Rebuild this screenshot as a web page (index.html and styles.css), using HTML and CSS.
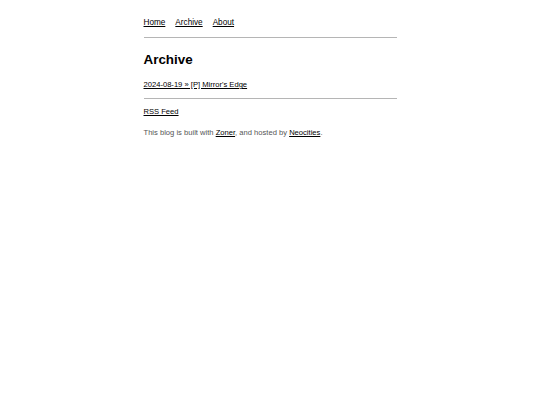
FILE: index.html
```html
<!DOCTYPE html>
<html>
<head>
<meta charset="utf-8">
<link rel="stylesheet" href="styles.css">
</head>
<body>
<div class="page">
  <nav class="nav">
    <a href="#">Home</a>
    <a href="#">Archive</a>
    <a href="#">About</a>
  </nav>
  <hr class="rule rule-top">
  <h1 class="title">Archive</h1>
  <ul class="posts">
    <li><a href="#">2024-08-19 » [P] Mirror's Edge</a></li>
  </ul>
  <hr class="rule rule-bottom">
  <p class="rss"><a href="#">RSS Feed</a></p>
  <p class="footer">This blog is built with <a href="#">Zoner</a>, and hosted by <a href="#">Neocities</a>.</p>
</div>
</body>
</html>
```
FILE: styles.css
```css
body {
  margin: 0;
  background: #fff;
  font-family: "Liberation Sans", Arial, sans-serif;
  font-size: 7.6px;
  color: #000;
}
.page {
  width: 253px;
  margin: 0 auto;
  padding-top: 17px;
}
a {
  color: #000;
  text-decoration: underline;
}
.nav {
  display: flex;
  gap: 10px;
  height: 11px;
  line-height: 11px;
  font-size: 8.2px;
}
.rule {
  border: 0;
  border-top: 1px solid #b5b5b5;
  margin: 0;
}
.rule-top {
  margin-top: 9px;
}
.title {
  font-size: 13.4px;
  font-weight: bold;
  margin: 13px 0 0;
  line-height: 17px;
}
.posts {
  list-style: none;
  margin: 11px 0 0;
  padding: 0;
  line-height: 11px;
}
.rule-bottom {
  margin-top: 8px;
}
.rss {
  margin: 7px 0 0;
  line-height: 11px;
}
.footer {
  margin: 10px 0 0;
  line-height: 11px;
  color: #555;
}
```
